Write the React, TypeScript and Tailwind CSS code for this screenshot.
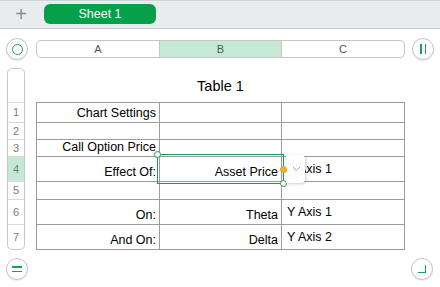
import React from 'react';

const font = { fontFamily: '"Liberation Sans", Arial, sans-serif' };

type Row = { n: number; h: string; a: string; b: string; c: string };

const rows: Row[] = [
  { n: 1, h: 'h-[20px]', a: 'Chart Settings', b: '', c: '' },
  { n: 2, h: 'h-[17px]', a: '', b: '', c: '' },
  { n: 3, h: 'h-[17px]', a: 'Call Option Price', b: '', c: '' },
  { n: 4, h: 'h-[25px]', a: 'Effect Of:', b: 'Asset Price', c: 'Y Axis 1' },
  { n: 5, h: 'h-[18px]', a: '', b: '', c: '' },
  { n: 6, h: 'h-[25px]', a: 'On:', b: 'Theta', c: 'Y Axis 1' },
  { n: 7, h: 'h-[25px]', a: 'And On:', b: 'Delta', c: 'Y Axis 2' },
];

function RoundBtn({ children }: { children: React.ReactNode }) {
  return (
    <div className="w-[22px] h-[22px] rounded-full border border-[#c4c4c4] bg-white shadow-[0_1px_1px_rgba(0,0,0,0.08)] flex items-center justify-center shrink-0">
      {children}
    </div>
  );
}

export default function App() {
  return (
    <div className="relative w-[440px] h-[287px] bg-white overflow-hidden text-black" style={font}>
      {/* Sheet tabs */}
      <div className="h-[29px] bg-[#e9ecef] border-t border-[#d2d5d8] border-b border-b-[#c9ccce] flex items-center">
        <span className="w-[42px] text-center text-[20px] leading-none text-[#8a8d90] font-light -mt-[2px]">+</span>
        <div className="ml-[2px] w-[112px] h-[20px] rounded-[6px] bg-[#07a04a] flex items-center justify-center text-white text-[12.5px] -mt-[1px]">
          Sheet 1
        </div>
      </div>

      {/* Column headers */}
      <div className="mt-[9px] pl-[6px] flex items-center h-[22px]">
        <RoundBtn>
          <div className="w-[11px] h-[11px] rounded-full border-[1.5px] border-[#1ba24f]" />
        </RoundBtn>
        <div className="ml-[8px] w-[369px] h-[18px] rounded-[5px] border border-[#c6c6c6] flex text-[11px] text-[#555] overflow-hidden">
          <div className="w-[122px] flex items-center justify-center">A</div>
          <div className="w-[122px] flex items-center justify-center bg-[#c6e9d6] border-l border-[#c6c6c6]">B</div>
          <div className="flex-1 flex items-center justify-center border-l border-[#c6c6c6]">C</div>
        </div>
        <div className="ml-[7px]">
          <RoundBtn>
            <div className="flex gap-[3px]">
              <div className="w-[1.5px] h-[10px] bg-[#1ba24f]" />
              <div className="w-[1.5px] h-[10px] bg-[#1ba24f]" />
            </div>
          </RoundBtn>
        </div>
      </div>

      {/* Body */}
      <div className="mt-[8px] pl-[7px] flex">
        <div className="w-[18px] border border-[#c9c9c9] rounded-[5px] flex flex-col overflow-hidden text-[11px] text-[#7a7a7a]">
          <div className="h-[33px]" />
          {rows.map((r) => (
            <div
              key={r.n}
              className={`${r.h} border-t border-[#dadada] flex items-center justify-center ${r.n === 4 ? 'bg-[#c6e9d6]' : ''}`}
            >
              {r.n}
            </div>
          ))}
        </div>

        <div className="ml-[11px] w-[369px] flex flex-col">
          <div className="h-[34px] flex items-center justify-center text-[14.5px] pt-[4px]">Table 1</div>
          <div className="border-t border-l border-[#9b9b9b] text-[12.5px] leading-[15px]">
            {rows.map((r) => (
              <div key={r.n} className={`flex ${r.n === 1 ? 'h-[20px]' : r.h}`}>
                <div className="w-[123px] border-r border-b border-[#9b9b9b] flex items-end justify-end pr-[3px] pb-[1px] whitespace-nowrap">
                  {r.a}
                </div>
                <div className="w-[122px] border-r border-b border-[#9b9b9b] flex items-end justify-end pr-[3px] pb-[1px] whitespace-nowrap">
                  {r.b}
                </div>
                <div className="w-[123px] border-r border-b border-[#9b9b9b] flex items-center pl-[5px] whitespace-nowrap">
                  {r.c}
                </div>
              </div>
            ))}
          </div>
        </div>
      </div>

      {/* Bottom controls */}
      <div className="mt-[8px] pl-[6px] flex">
        <RoundBtn>
          <div className="flex flex-col gap-[3px]">
            <div className="w-[10px] h-[1.5px] bg-[#1ba24f]" />
            <div className="w-[10px] h-[1.5px] bg-[#1ba24f]" />
          </div>
        </RoundBtn>
        <div className="ml-[383px]">
          <RoundBtn>
            <div className="w-[8px] h-[8px] border-r-[1.5px] border-b-[1.5px] border-[#1ba24f] -mt-[1px] -ml-[1px]" />
          </RoundBtn>
        </div>
      </div>

      {/* Selection overlay */}
      <div className="absolute left-[157px] top-[154px] w-[127px] h-[30px] border border-[#1b9e4b] pointer-events-none" />
      <div className="absolute left-[154px] top-[151px] w-[7px] h-[7px] rounded-full bg-white border border-[#1b9e4b]" />
      <div className="absolute left-[280px] top-[180px] w-[7px] h-[7px] rounded-full bg-white border border-[#1b9e4b]" />
      <div className="absolute left-[286px] top-[155px] w-[19px] h-[28px] bg-white rounded-r-[4px] shadow-[1px_1px_3px_rgba(0,0,0,0.2)] flex items-center justify-center">
        <svg width="9" height="6" viewBox="0 0 9 6" className="ml-[1px]">
          <path d="M1 1 L4.5 4.5 L8 1" fill="none" stroke="#a8a8a8" strokeWidth="1" />
        </svg>
      </div>
      <div className="absolute left-[280px] top-[166px] w-[7px] h-[7px] rounded-full bg-[#f5b324] border border-[#e0a020]" />
    </div>
  );
}
